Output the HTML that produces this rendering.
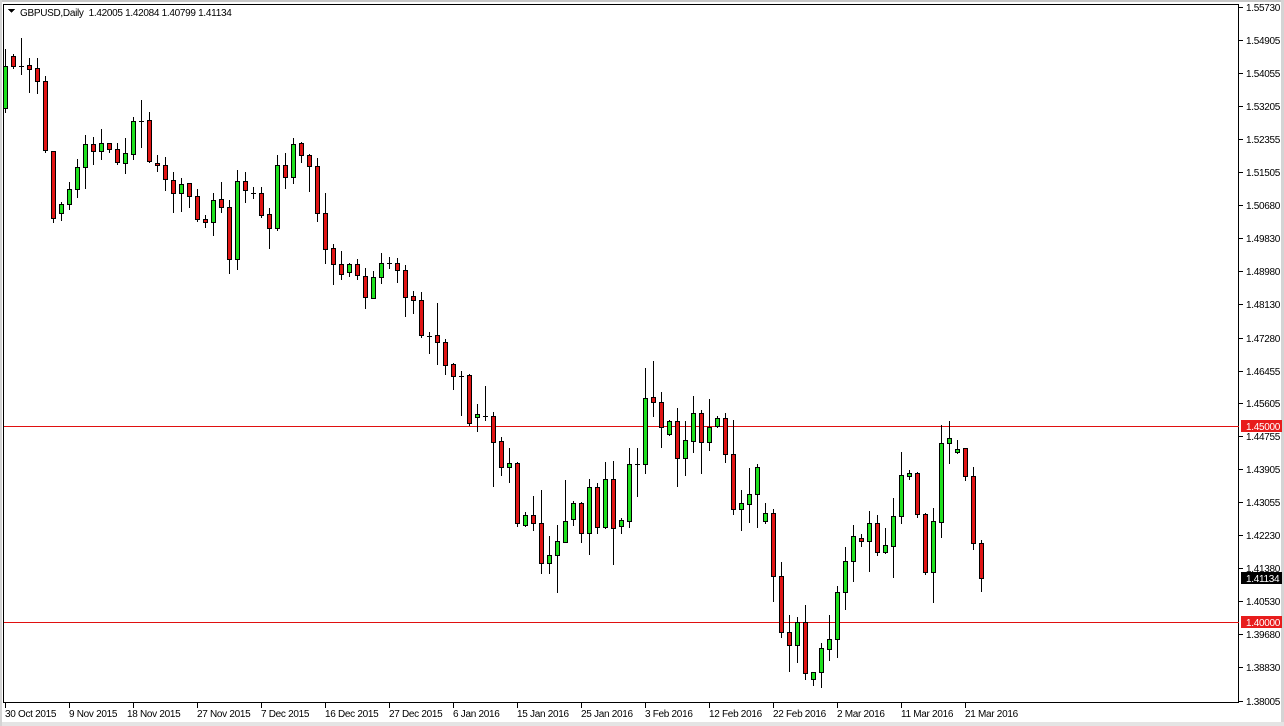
<!DOCTYPE html>
<html><head><meta charset="utf-8"><style>
html,body{margin:0;padding:0;background:#fff;}
body{width:1284px;height:726px;position:relative;overflow:hidden;font-family:"Liberation Sans",Arial,sans-serif;}
svg{position:absolute;left:0;top:0;}
text{letter-spacing:-0.3px;}
</style></head><body>
<svg width="1284" height="726" xmlns="http://www.w3.org/2000/svg" shape-rendering="crispEdges" font-family="Liberation Sans, Arial, sans-serif" font-size="10">
<rect x="0" y="0" width="1284" height="726" fill="#fff"/>
<rect x="0" y="0" width="1284" height="2" fill="#c8c8c8"/>
<rect x="1281" y="0" width="3" height="726" fill="#d4d4d4"/>
<rect x="0" y="722" width="1284" height="4" fill="#e4e4e4"/>
<rect x="0" y="0" width="2" height="726" fill="#d4d4d4"/>
<rect x="3.5" y="4.5" width="1235" height="698" fill="none" stroke="#000" stroke-width="1"/>
<g id="lines">
<line x1="4" y1="426.5" x2="1239" y2="426.5" stroke="#e01010" stroke-width="1"/>
<line x1="4" y1="622.5" x2="1239" y2="622.5" stroke="#e01010" stroke-width="1"/>
</g>
<g id="candles"></g>
<text x="20" y="16" fill="#000">GBPUSD,Daily&#160; 1.42005 1.42084 1.40799 1.41134</text>
<polygon points="8,9 15,9 11.5,13" fill="#000"/>
<g id="yaxis" fill="#000">
<text x="1246" y="11">1.55730</text>
<text x="1246" y="44">1.54905</text>
<text x="1246" y="77">1.54055</text>
<text x="1246" y="110">1.53205</text>
<text x="1246" y="143">1.52355</text>
<text x="1246" y="176">1.51505</text>
<text x="1246" y="209">1.50680</text>
<text x="1246" y="242">1.49830</text>
<text x="1246" y="275">1.48980</text>
<text x="1246" y="308">1.48130</text>
<text x="1246" y="342">1.47280</text>
<text x="1246" y="375">1.46455</text>
<text x="1246" y="407">1.45605</text>
<text x="1246" y="440">1.44755</text>
<text x="1246" y="473">1.43905</text>
<text x="1246" y="506">1.43055</text>
<text x="1246" y="539">1.42230</text>
<text x="1246" y="572">1.41380</text>
<text x="1246" y="605">1.40530</text>
<text x="1246" y="638">1.39680</text>
<text x="1246" y="671">1.38830</text>
<text x="1246" y="705">1.38005</text>
</g>
<rect x="1241" y="420" width="41" height="12" fill="#e81c1c"/>
<text x="1246" y="430" fill="#fff">1.45000</text>
<rect x="1241" y="616" width="41" height="12" fill="#e81c1c"/>
<text x="1246" y="626" fill="#fff">1.40000</text>
<rect x="1241" y="572" width="41" height="12" fill="#000"/>
<text x="1246" y="582" fill="#fff">1.41134</text>
<g id="ticks" stroke="#000"></g>
<g id="xaxis" fill="#000">
<text x="5" y="717">30 Oct 2015</text>
<text x="69" y="717">9 Nov 2015</text>
<text x="127" y="717">18 Nov 2015</text>
<text x="197" y="717">27 Nov 2015</text>
<text x="261" y="717">7 Dec 2015</text>
<text x="325" y="717">16 Dec 2015</text>
<text x="389" y="717">27 Dec 2015</text>
<text x="453" y="717">6 Jan 2016</text>
<text x="517" y="717">15 Jan 2016</text>
<text x="581" y="717">25 Jan 2016</text>
<text x="645" y="717">3 Feb 2016</text>
<text x="709" y="717">12 Feb 2016</text>
<text x="773" y="717">22 Feb 2016</text>
<text x="837" y="717">2 Mar 2016</text>
<text x="901" y="717">11 Mar 2016</text>
<text x="965" y="717">21 Mar 2016</text>
</g>
</svg>
<script>
var D=`g 66 108 49 112
r 56 66 54 68
d 66 66 38 74
r 65 69 58 92
r 68 81 58 93
r 81 150 76 152
r 151 218 151 222
g 204 213 202 220
g 189 204 182 209
g 167 189 159 197
g 144 167 135 188
r 144 151 137 164
g 143 151 129 159
r 143 149 143 152
r 149 162 143 164
g 153 163 138 173
g 121 154 117 159
d 121 121 100 147
r 120 161 112 162
r 163 165 155 171
r 165 179 157 190
r 180 193 172 212
g 184 193 178 211
r 183 196 183 207
r 196 219 189 221
r 219 222 215 227
g 200 222 193 235
r 199 207 182 212
r 207 259 200 273
g 181 259 170 269
r 181 190 172 202
d 193 193 187 198
r 193 215 187 217
r 214 228 208 248
g 165 228 155 230
r 165 177 153 188
g 144 177 138 183
r 143 155 142 162
r 155 166 154 191
r 166 213 158 221
r 213 249 193 263
r 248 264 244 284
r 264 274 251 279
g 264 272 263 276
r 264 275 259 279
r 276 297 268 308
g 277 298 271 298
g 263 277 253 283
d 263 263 257 268
r 263 270 258 282
r 270 297 265 316
r 296 300 291 313
r 300 335 292 337
d 336 336 332 353
r 335 342 303 364
r 342 365 339 374
r 364 376 363 389
d 376 376 371 415
r 375 423 374 425
g 414 417 404 431
d 416 416 386 420
r 416 442 412 486
r 441 467 437 475
g 463 467 448 482
r 463 523 462 526
g 515 525 512 526
r 515 523 496 530
r 523 563 490 573
g 555 563 536 573
g 541 555 525 592
g 521 542 480 542
g 503 519 501 525
r 503 533 502 542
g 487 533 479 554
r 487 527 483 533
g 479 527 462 528
r 479 528 461 564
g 520 526 518 533
g 464 521 448 527
d 464 464 448 496
g 398 464 368 473
r 397 402 361 416
r 402 427 392 447
g 421 434 420 435
r 421 458 408 486
g 440 458 421 475
g 413 441 396 452
r 413 442 410 473
g 427 442 399 450
g 418 426 416 427
r 418 454 413 462
r 454 509 420 514
g 503 509 490 530
g 494 504 468 522
g 467 494 464 527
g 513 521 503 523
r 513 576 509 601
r 576 632 562 637
r 632 645 615 671
g 622 645 617 662
r 622 673 605 679
g 672 679 672 685
g 648 672 643 687
g 639 649 615 660
g 592 639 586 657
g 561 592 547 609
g 536 561 525 581
r 538 541 534 546
g 523 541 511 571
r 523 552 515 555
g 545 552 528 553
g 516 546 498 577
g 475 516 452 523
g 473 476 470 479
r 473 514 472 517
r 514 572 513 574
g 521 572 508 602
g 443 522 425 537
g 438 443 421 463
g 449 452 440 453
r 448 476 448 480
r 476 543 467 549
r 543 578 540 591`.split("\n");
var NS="http://www.w3.org/2000/svg",g=document.getElementById("candles");
function R(x,y,w,h,f){var e=document.createElementNS(NS,"rect");e.setAttribute("x",x);e.setAttribute("y",y);e.setAttribute("width",w);e.setAttribute("height",h);e.setAttribute("fill",f);g.appendChild(e);}
D.forEach(function(l,i){var p=l.trim().split(/\s+/),t=p[0],bt=+p[1],bb=+p[2],wt=+p[3],wb=+p[4],x=5+8*i;
R(x,wt,1,wb-wt+1,"#000");
if(t=="d"){R(x-2,bt,5,1,"#000");}
else{R(x-2,bt,5,bb-bt+1,"#000");if(bb-bt>=2)R(x-1,bt+1,3,bb-bt-1,t=="g"?"#1ee01e":"#e01414");}
});
var tk=document.getElementById("ticks");
for(var k=0;k<16;k++){var x=5+64*k+0.5;var e=document.createElementNS(NS,"line");e.setAttribute("x1",x);e.setAttribute("x2",x);e.setAttribute("y1",703);e.setAttribute("y2",708);tk.appendChild(e);}
var ys=[7,40,73,106,139,172,205,238,271,304,338,371,403,436,469,502,535,568,601,634,667,701];
ys.forEach(function(y){var e=document.createElementNS(NS,"line");e.setAttribute("x1",1239);e.setAttribute("x2",1243);e.setAttribute("y1",y+0.5);e.setAttribute("y2",y+0.5);tk.appendChild(e);});
</script>
</body></html>
